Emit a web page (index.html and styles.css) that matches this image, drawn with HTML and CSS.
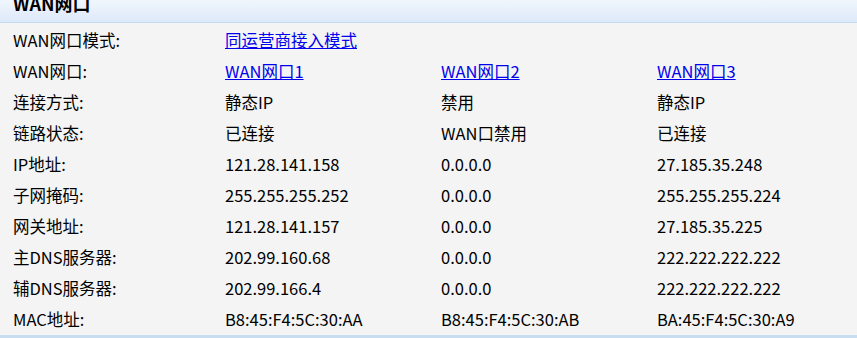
FILE: index.html
```html
<!DOCTYPE html>
<html lang="zh-CN">
<head>
<meta charset="utf-8">
<title>WAN网口</title>
<link rel="stylesheet" href="styles.css">
</head>
<body>
<div class="panel">
  <div class="panel-head">
    <h2 class="panel-title">WAN网口</h2>
  </div>
  <div class="info-grid">
    <div class="lbl">WAN网口模式:</div>
    <div class="val span3"><a href="#">同运营商接入模式</a></div>

    <div class="lbl">WAN网口:</div>
    <div class="val"><a href="#">WAN网口1</a></div>
    <div class="val"><a href="#">WAN网口2</a></div>
    <div class="val"><a href="#">WAN网口3</a></div>

    <div class="lbl">连接方式:</div>
    <div class="val">静态IP</div>
    <div class="val">禁用</div>
    <div class="val">静态IP</div>

    <div class="lbl">链路状态:</div>
    <div class="val">已连接</div>
    <div class="val">WAN口禁用</div>
    <div class="val">已连接</div>

    <div class="lbl">IP地址:</div>
    <div class="val num">121.28.141.158</div>
    <div class="val num">0.0.0.0</div>
    <div class="val num">27.185.35.248</div>

    <div class="lbl">子网掩码:</div>
    <div class="val num">255.255.255.252</div>
    <div class="val num">0.0.0.0</div>
    <div class="val num">255.255.255.224</div>

    <div class="lbl">网关地址:</div>
    <div class="val num">121.28.141.157</div>
    <div class="val num">0.0.0.0</div>
    <div class="val num">27.185.35.225</div>

    <div class="lbl">主DNS服务器:</div>
    <div class="val num">202.99.160.68</div>
    <div class="val num">0.0.0.0</div>
    <div class="val num">222.222.222.222</div>

    <div class="lbl">辅DNS服务器:</div>
    <div class="val num">202.99.166.4</div>
    <div class="val num">0.0.0.0</div>
    <div class="val num">222.222.222.222</div>

    <div class="lbl">MAC地址:</div>
    <div class="val num">B8:45:F4:5C:30:AA</div>
    <div class="val num">B8:45:F4:5C:30:AB</div>
    <div class="val num">BA:45:F4:5C:30:A9</div>
  </div>
</div>
</body>
</html>
```
FILE: styles.css
```css
html, body {
  margin: 0;
  padding: 0;
  background: #f4f4f4;
}
body {
  font-family: "Noto Sans CJK SC", "Noto Sans", sans-serif;
  font-size: 16.5px;
  color: #000;
  width: 857px;
  height: 338px;
  overflow: hidden;
}
.panel {
  background: #f4f4f4;
  border-bottom: 3px solid #c9ddf0;
  height: 335px;
  box-sizing: content-box;
  overflow: hidden;
}
.panel-head {
  height: 22px;
  background: linear-gradient(#f0f6fd, #dde9f9);
  border-bottom: 1px solid #c4dbf3;
  overflow: hidden;
  padding: 0 13px;
}
.panel-title {
  margin: -8px 0 0 0;
  font-size: 18px;
  font-weight: bold;
  line-height: 22px;
}
.info-grid {
  display: grid;
  grid-template-columns: 212px 216px 216px 1fr;
  grid-auto-rows: 31px;
  padding: 2px 0 0 13px;
  align-items: center;
}
.lbl, .val {
  line-height: 31px;
  white-space: nowrap;
}
.span3 {
  grid-column: span 3;
}
.val a {
  color: #0000ee;
  text-decoration: underline;
}
```
